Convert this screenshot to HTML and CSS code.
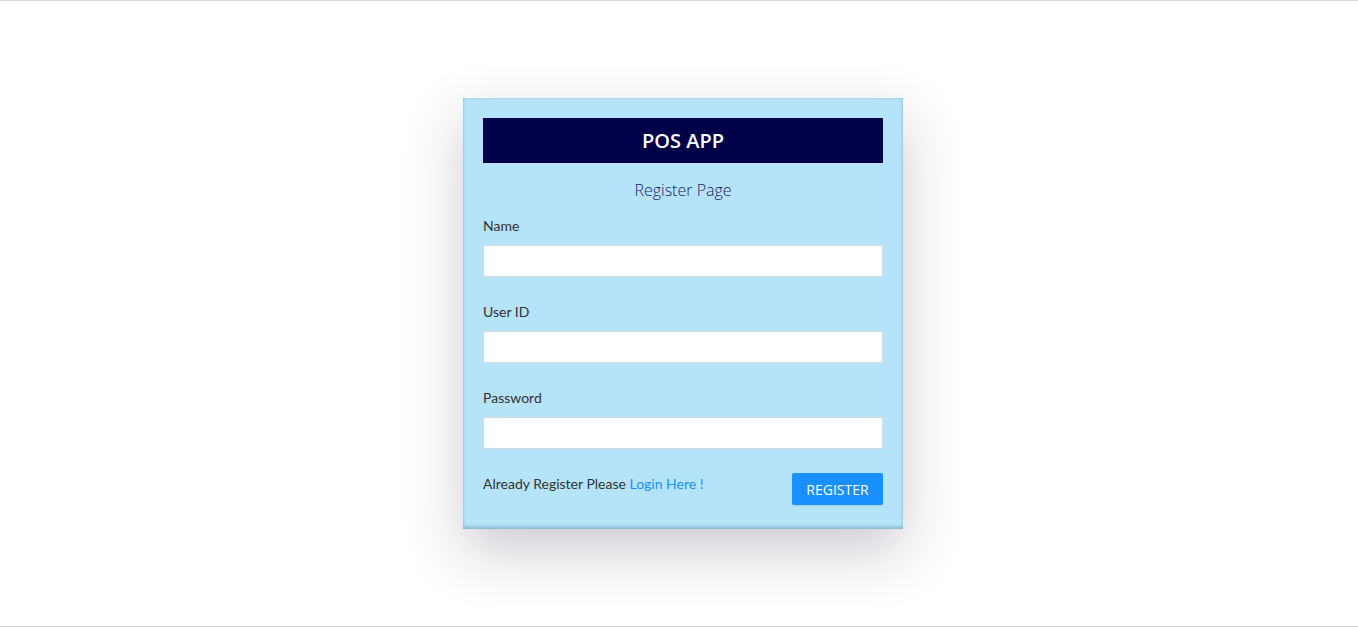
FILE: index.html
```html
<!DOCTYPE html>
<html lang="en">
<head>
<meta charset="utf-8">
<title>POS APP - Register</title>
<link rel="stylesheet" href="styles.css">
</head>
<body>
<div class="page">
  <div class="card">
    <div class="brand">POS APP</div>
    <div class="subtitle">Register Page</div>
    <form class="form">
      <div class="item">
        <label class="label">Name</label>
        <input class="input" type="text">
      </div>
      <div class="item">
        <label class="label">User ID</label>
        <input class="input" type="text">
      </div>
      <div class="item">
        <label class="label">Password</label>
        <input class="input" type="password">
      </div>
      <div class="footer">
        <p class="note">Already Register Please <a class="link" href="#">Login Here !</a></p>
        <button class="btn" type="button">REGISTER</button>
      </div>
    </form>
  </div>
</div>
</body>
</html>
```
FILE: styles.css
```css
html, body {
  margin: 0;
  padding: 0;
  height: 100%;
  background: #ffffff;
}
body {
  font-family: Lato, "Open Sans", Arial, sans-serif;
  font-size: 14px;
  color: #333;
  border-top: 1px solid #dddddd;
  box-sizing: border-box;
}
.page {
  height: 626px;
  display: flex;
  align-items: center;
  justify-content: center;
  padding-left: 8px;
  box-sizing: border-box;
  border-bottom: 1px solid #d4d4d4;
}
.card {
  width: 440px;
  box-sizing: border-box;
  background: #b5e3f9;
  box-shadow:
    inset 0 -3px 3px rgba(40, 90, 130, 0.22),
    inset 0 0 3px rgba(40, 90, 130, 0.2),
    0 22px 55px rgba(40, 30, 60, 0.24);
  padding: 20px 20px 24px;
}
.brand {
  height: 45px;
  background: #00004a;
  color: #ffffff;
  font-family: "Open Sans", "Noto Sans", sans-serif;
  font-weight: 600;
  font-size: 20px;
  display: flex;
  align-items: center;
  justify-content: center;
}
.subtitle {
  margin: 16px 0 14px;
  line-height: 22px;
  text-align: center;
  font-family: "Open Sans", "Noto Sans", sans-serif;
  font-weight: 300;
  font-size: 16px;
  color: #1d1d6a;
}
.form {
  display: flex;
  flex-direction: column;
}
.item {
  display: flex;
  flex-direction: column;
  margin-bottom: 24px;
}
.label {
  line-height: 22px;
  padding-bottom: 8px;
  font-size: 14px;
  color: #333;
}
.input {
  height: 32px;
  box-sizing: border-box;
  border: 1px solid #d9d9d9;
  border-radius: 2px;
  background: #ffffff;
  padding: 4px 11px;
  font-size: 14px;
  outline: none;
}
.footer {
  display: flex;
  justify-content: space-between;
  align-items: flex-start;
}
.note {
  margin: 0;
  line-height: 22px;
  color: #333;
}
.link {
  color: #1890ff;
  text-decoration: none;
}
.btn {
  height: 32px;
  width: 91px;
  border: none;
  border-radius: 2px;
  background: #1890ff;
  color: #ffffff;
  font-family: "Open Sans", "Noto Sans", sans-serif;
  font-size: 14px;
  box-shadow: 0 2px 0 rgba(0, 0, 0, 0.045);
}
```
